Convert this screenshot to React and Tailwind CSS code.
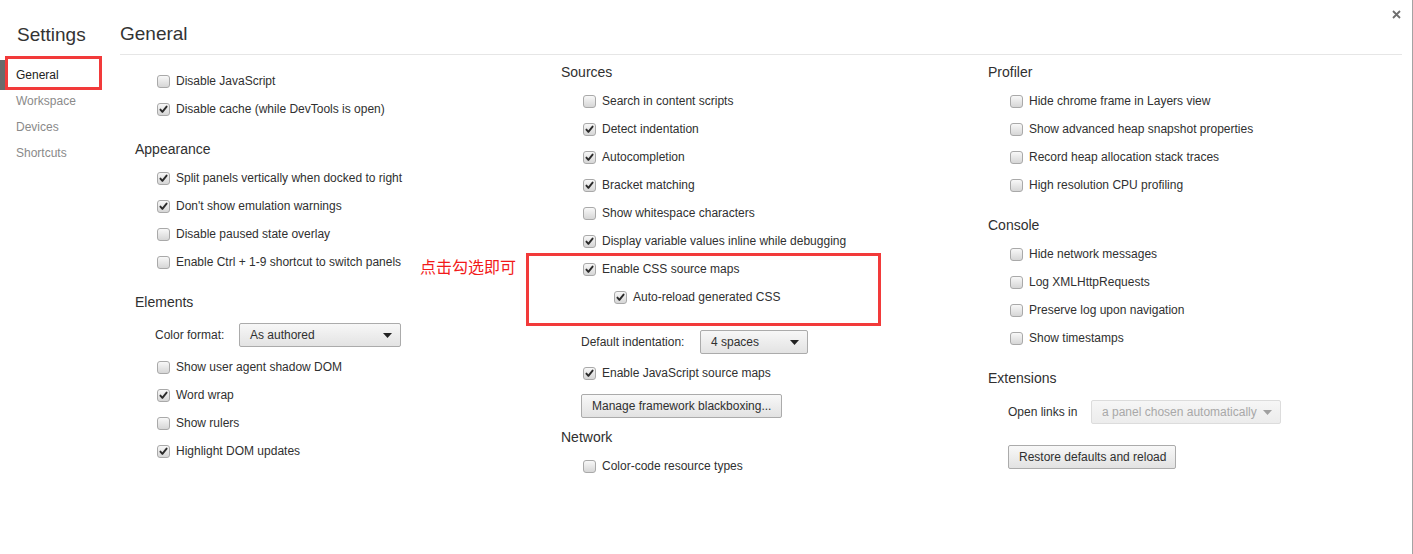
import React from "react";

const FONT = { fontFamily: '"Liberation Sans", Arial, sans-serif' };

function Box({ checked }) {
  return (
    <span className="w-[13px] h-[13px] rounded-[3px] border border-[#a9a9a9] bg-linear-to-b from-[#f8f8f8] to-[#d6d6d6] flex items-center justify-center shrink-0">
      {checked && (
        <svg width="9" height="9" viewBox="0 0 9 9">
          <path d="M1.4 4.6 L3.4 6.9 L7.6 1.6" stroke="#2b2b2b" strokeWidth="1.9" fill="none" strokeLinecap="round" strokeLinejoin="round" />
        </svg>
      )}
    </span>
  );
}

function Row({ label, checked, indent = "pl-[22px]" }) {
  return (
    <div className={`h-[28px] flex items-center gap-[6px] ${indent}`}>
      <Box checked={checked} />
      <span className="text-[12px] text-[#303030] whitespace-nowrap">{label}</span>
    </div>
  );
}

function Header({ children }) {
  return (
    <div className="h-[28px] pb-[2px] flex items-center text-[14px] text-[#303030] whitespace-nowrap">{children}</div>
  );
}

function Tri({ color = "#222" }) {
  return (
    <svg width="9" height="5" viewBox="0 0 9 5">
      <path d="M0 0 L9 0 L4.5 5 Z" fill={color} />
    </svg>
  );
}

function Select({ value, width, disabled }) {
  return (
    <div
      className={`h-[24px] ${width} rounded-[2px] border flex items-center justify-between pl-[10px] pr-[8px] text-[12px] ${
        disabled
          ? "border-[#dcdcdc] bg-linear-to-b from-[#f6f6f6] to-[#ececec] text-[#a8a8a8]"
          : "border-[#ababab] bg-linear-to-b from-[#f7f7f7] to-[#e3e3e3] text-[#303030]"
      }`}
    >
      <span className="whitespace-nowrap">{value}</span>
      <Tri color={disabled ? "#a0a0a0" : "#222"} />
    </div>
  );
}

function Button({ children, width }) {
  return (
    <div className={`h-[24px] ${width} rounded-[2px] border border-[#ababab] bg-linear-to-b from-[#f8f8f8] to-[#e2e2e2] flex items-center pl-[10px] text-[12px] text-[#303030] whitespace-nowrap`}>
      {children}
    </div>
  );
}

export default function App() {
  return (
    <div className="relative flex h-[554px] w-full bg-white overflow-hidden" style={FONT}>
      {/* Sidebar */}
      <div className="w-[120px] shrink-0 pt-[24px]">
        <div className="pl-[17px] text-[19px] leading-[22px] text-[#333] font-light">Settings</div>
        <div className="mt-[16px] flex flex-col">
          <div className="relative h-[26px] flex items-center pl-[16px] text-[12px] text-[#222]">
            <span className="absolute left-0 top-[-2px] h-[30px] w-[5px] bg-[#6a6a6a]" />
            General
          </div>
          <div className="h-[26px] flex items-center pl-[16px] text-[12px] text-[#8a8a8a]">Workspace</div>
          <div className="h-[26px] flex items-center pl-[16px] text-[12px] text-[#8a8a8a]">Devices</div>
          <div className="h-[26px] flex items-center pl-[16px] text-[12px] text-[#8a8a8a]">Shortcuts</div>
        </div>
      </div>

      {/* Main */}
      <div className="flex-1 pr-[11px]">
        <div className="h-[55px] border-b border-[#e6e6e6] pt-[23px]">
          <div className="text-[19px] leading-[22px] text-[#333] font-light">General</div>
        </div>
        <div className="grid grid-cols-[426px_427px_400px] pl-[15px] pt-[4px]">
          {/* Column 1 */}
          <div className="pt-[8px]">
            <Row label="Disable JavaScript" />
            <Row label="Disable cache (while DevTools is open)" checked />
            <div className="mt-[13px]">
              <Header>Appearance</Header>
              <Row label="Split panels vertically when docked to right" checked />
              <Row label="Don't show emulation warnings" checked />
              <Row label="Disable paused state overlay" />
              <Row label="Enable Ctrl + 1-9 shortcut to switch panels" />
            </div>
            <div className="mt-[13px]">
              <Header>Elements</Header>
              <div className="h-[36px] flex items-center pl-[20px]">
                <span className="w-[84px] text-[12px] text-[#303030]">Color format:</span>
                <Select value="As authored" width="w-[162px]" />
              </div>
              <Row label="Show user agent shadow DOM" />
              <Row label="Word wrap" checked />
              <Row label="Show rulers" />
              <Row label="Highlight DOM updates" checked />
            </div>
          </div>

          {/* Column 2 */}
          <div>
            <Header>Sources</Header>
            <Row label="Search in content scripts" />
            <Row label="Detect indentation" checked />
            <Row label="Autocompletion" checked />
            <Row label="Bracket matching" checked />
            <Row label="Show whitespace characters" />
            <Row label="Display variable values inline while debugging" checked />
            <Row label="Enable CSS source maps" checked />
            <Row label="Auto-reload generated CSS" checked indent="pl-[53px]" />
            <div className="mt-[14px] h-[34px] flex items-center pl-[20px]">
              <span className="w-[119px] text-[12px] text-[#303030]">Default indentation:</span>
              <Select value="4 spaces" width="w-[108px]" />
            </div>
            <Row label="Enable JavaScript source maps" checked />
            <div className="pt-[7px] pb-[6px] pl-[20px]">
              <Button width="w-[201px]">Manage framework blackboxing...</Button>
            </div>
            <Header>Network</Header>
            <Row label="Color-code resource types" />
          </div>

          {/* Column 3 */}
          <div>
            <Header>Profiler</Header>
            <Row label="Hide chrome frame in Layers view" />
            <Row label="Show advanced heap snapshot properties" />
            <Row label="Record heap allocation stack traces" />
            <Row label="High resolution CPU profiling" />
            <div className="mt-[13px]">
              <Header>Console</Header>
              <Row label="Hide network messages" />
              <Row label="Log XMLHttpRequests" />
              <Row label="Preserve log upon navigation" />
              <Row label="Show timestamps" />
            </div>
            <div className="mt-[13px]">
              <Header>Extensions</Header>
              <div className="h-[38px] flex items-center pl-[20px]">
                <span className="w-[83px] text-[12px] text-[#303030]">Open links in</span>
                <Select value="a panel chosen automatically" width="w-[190px]" disabled />
              </div>
              <div className="mt-[14px] pl-[20px]">
                <Button width="w-[168px]">Restore defaults and reload</Button>
              </div>
            </div>
          </div>
        </div>
      </div>

      {/* Close button */}
      <svg className="absolute right-[12px] top-[10px]" width="9" height="9" viewBox="0 0 9 9">
        <path d="M1 1 L8 8 M8 1 L1 8" stroke="#6e6e6e" strokeWidth="1.8" />
      </svg>

      {/* Right edge line */}
      <div className="absolute right-0 top-0 h-full w-[1px] bg-[#a3a3a3]" />

      {/* Annotations */}
      <div className="absolute left-[5px] top-[56px] w-[97px] h-[34px] border-[3px] border-[#f23a3a]" />
      <div className="absolute left-[526px] top-[253px] w-[355px] h-[73px] border-[3px] border-[#f23a3a]" />
      <div
        className="absolute left-[420px] top-[257px] text-[16px] leading-[18px] text-[#f21a1a] whitespace-nowrap"
        style={{ fontFamily: '"Noto Sans CJK SC", sans-serif' }}
      >
        点击勾选即可
      </div>
    </div>
  );
}
